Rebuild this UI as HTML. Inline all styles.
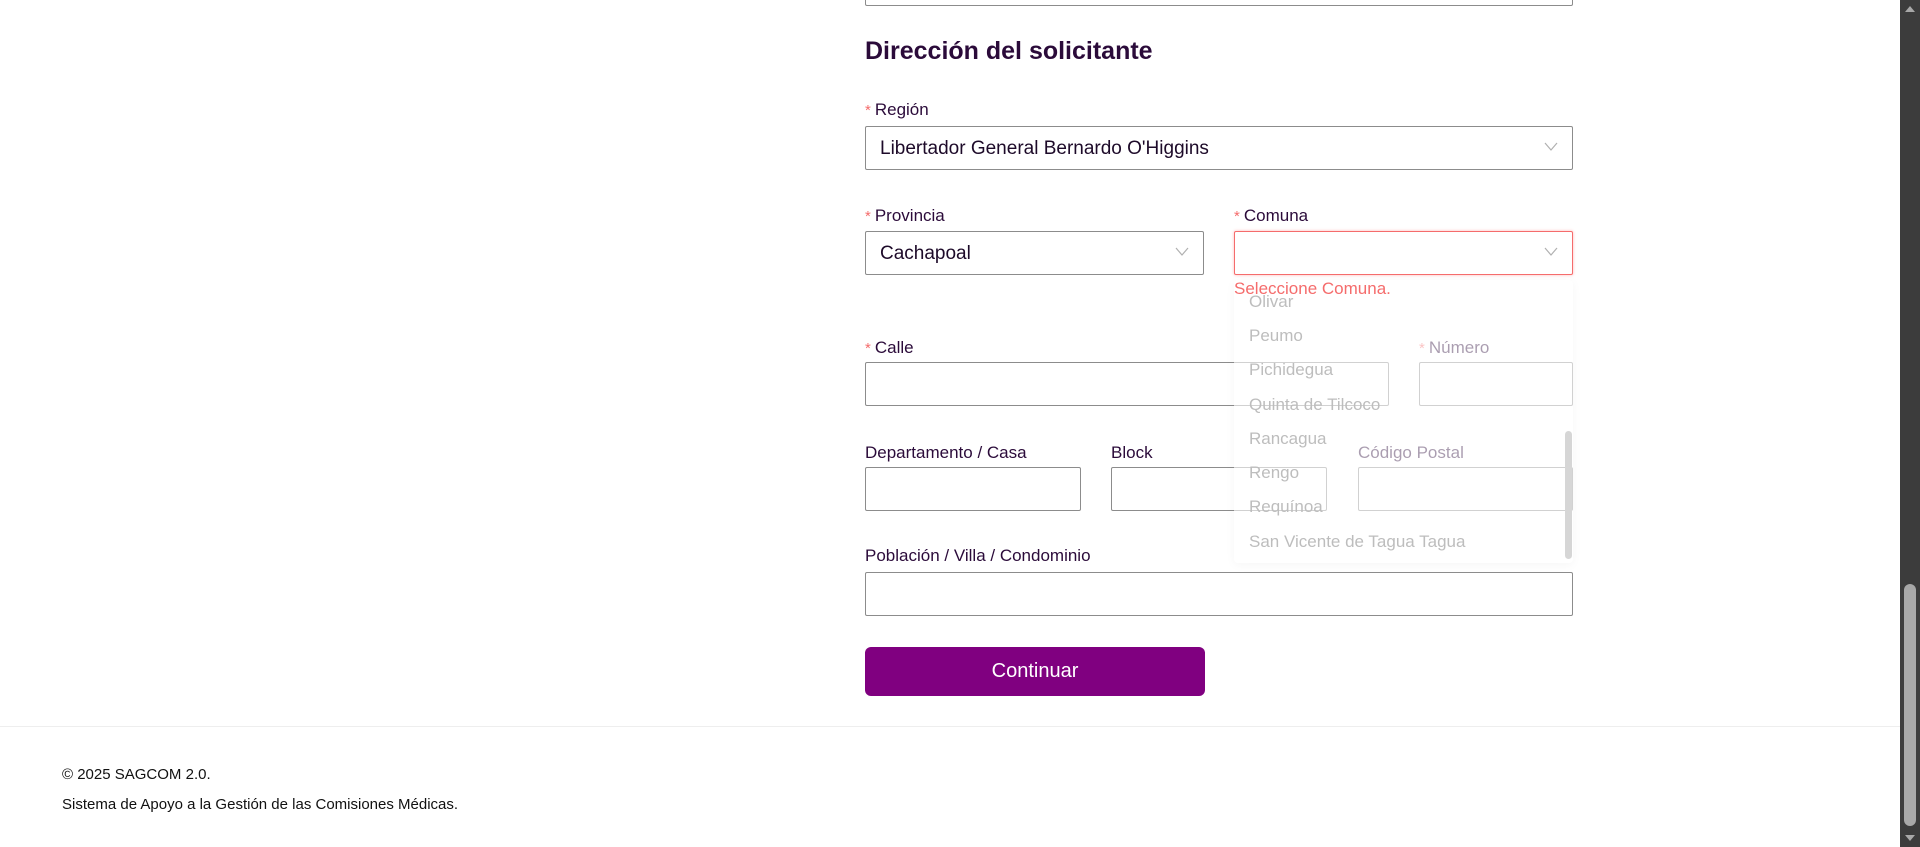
<!DOCTYPE html>
<html><head><meta charset="utf-8"><style>
*{box-sizing:border-box;margin:0;padding:0}
body{width:1920px;height:847px;overflow:hidden;background:#fff;font-family:"Liberation Sans",sans-serif;color:#2b0b3a;position:relative}
.a{position:absolute}
.box{position:absolute;border:1px solid #8c8c8c;border-radius:2px;background:#fff}
.lbl{position:absolute;font-size:17px;color:#2b0b3a}
.st{color:#f56c6c;font-size:15px;margin-right:4px}
.val{position:absolute;left:14px;top:11px;font-size:19px;color:#1d0a29}
.chev{position:absolute;right:14px;top:15px;width:14px;height:10px}
.it{position:absolute;left:15px;font-size:17px;color:#bdbdbd}
</style></head><body>
<div class="box" style="left:865px;top:-10px;width:708px;height:16px"></div>
<div class="a" style="left:865px;top:37px;font-size:25px;font-weight:bold;color:#2b0b3a">Dirección del solicitante</div>

<div class="lbl" style="left:865px;top:100px"><span class="st">*</span>Región</div>
<div class="box" style="left:865px;top:126px;width:708px;height:44px"><span class="val">Libertador General Bernardo O'Higgins</span><svg class="chev" viewBox="0 0 14 10"><path d="M1 1L7 8L13 1" fill="none" stroke="#b0b0b0" stroke-width="1.2"/></svg></div>

<div class="lbl" style="left:865px;top:206px"><span class="st">*</span>Provincia</div>
<div class="box" style="left:865px;top:231px;width:339px;height:44px"><span class="val">Cachapoal</span><svg class="chev" viewBox="0 0 14 10"><path d="M1 1L7 8L13 1" fill="none" stroke="#b0b0b0" stroke-width="1.2"/></svg></div>

<div class="lbl" style="left:1234px;top:206px"><span class="st">*</span>Comuna</div>
<div class="box" style="left:1234px;top:231px;width:339px;height:44px;border-color:#f56c6c;box-shadow:0 0 3px #fbb"><svg class="chev" viewBox="0 0 14 10"><path d="M1 1L7 8L13 1" fill="none" stroke="#b0b0b0" stroke-width="1.2"/></svg></div>

<div class="lbl" style="left:865px;top:338px"><span class="st">*</span>Calle</div>
<div class="box" style="left:865px;top:362px;width:524px;height:44px"></div>
<div class="lbl" style="left:1419px;top:338px"><span class="st">*</span>Número</div>
<div class="box" style="left:1419px;top:362px;width:154px;height:44px"></div>

<div class="lbl" style="left:865px;top:443px">Departamento / Casa</div>
<div class="box" style="left:865px;top:467px;width:216px;height:44px"></div>
<div class="lbl" style="left:1111px;top:443px">Block</div>
<div class="box" style="left:1111px;top:467px;width:216px;height:44px"></div>
<div class="lbl" style="left:1358px;top:443px">Código Postal</div>
<div class="box" style="left:1358px;top:467px;width:215px;height:44px"></div>

<div class="lbl" style="left:865px;top:546px">Población / Villa / Condominio</div>
<div class="box" style="left:865px;top:572px;width:708px;height:44px"></div>

<div class="a" style="left:865px;top:647px;width:340px;height:49px;background:#800080;border-radius:6px;color:#fff;font-size:20px;text-align:center;line-height:49px">Continuar</div>

<div class="a" style="left:1234px;top:280px;width:339px;height:283px;background:rgba(255,255,255,0.6);border-radius:4px;box-shadow:0 2px 10px rgba(0,0,0,0.04)">
<div class="it" style="top:12px">Olivar</div>
<div class="it" style="top:46px">Peumo</div>
<div class="it" style="top:80px">Pichidegua</div>
<div class="it" style="top:115px">Quinta de Tilcoco</div>
<div class="it" style="top:149px">Rancagua</div>
<div class="it" style="top:183px">Rengo</div>
<div class="it" style="top:217px">Requínoa</div>
<div class="it" style="top:252px">San Vicente de Tagua Tagua</div>
<div class="a" style="left:331px;top:151px;width:7px;height:128px;background:#d6d6d6;border-radius:4px"></div>
</div>
<div class="a" style="left:1234px;top:279px;font-size:17px;color:#f56c6c;z-index:5">Seleccione Comuna.</div>

<div class="a" style="left:0;top:726px;width:1900px;border-top:1px solid #eee"></div>
<div class="a" style="left:62px;top:766px;font-size:15px;color:#111">© 2025 SAGCOM 2.0.</div>
<div class="a" style="left:62px;top:796px;font-size:15px;color:#111">Sistema de Apoyo a la Gestión de las Comisiones Médicas.</div>

<div class="a" style="left:1900px;top:0;width:20px;height:847px;background:#3c3c3c"></div>
<div class="a" style="left:1904px;top:584px;width:12px;height:242px;background:#a8a8a8;border-radius:6px"></div>
<svg class="a" style="left:1904px;top:4px" width="12" height="10"><path d="M1 8L6 2L11 8Z" fill="#a8a8a8"/></svg>
<svg class="a" style="left:1904px;top:833px" width="12" height="10"><path d="M1 2L6 8L11 2Z" fill="#a8a8a8"/></svg>
</body></html>
